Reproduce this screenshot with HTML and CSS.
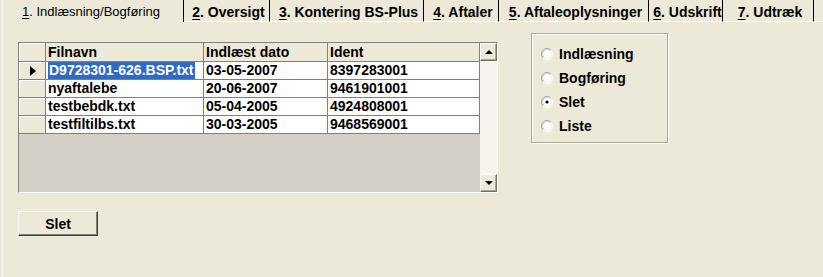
FILE: index.html
```html
<!DOCTYPE html>
<html>

<head>
    <meta charset="UTF-8">
    <link rel="stylesheet" href="styles.css">
</head>

<body>
    <!-- faneblade -->
    <div class="tabs">
        <div class="tab active"><u>1</u>. Indlæsning/Bogføring</div>
        <div class="tab t2"><u>2</u>. Oversigt</div>
        <div class="tab t3"><u>3</u>. Kontering BS-Plus</div>
        <div class="tab t4"><u>4</u>. Aftaler</div>
        <div class="tab t5"><u>5</u>. Aftaleoplysninger</div>
        <div class="tab t6"><u>6</u>. Udskrift</div>
        <div class="tab t7"><u>7</u>. Udtræk</div>
        <div class="tab-rest"></div>
    </div>

    <div class="panel">
        <div class="left">
            <!-- filoversigt -->
            <div class="grid">
                <div class="rows">
                    <div class="row head">
                        <div class="ind"></div>
                        <div class="cell">Filnavn</div>
                        <div class="cell">Indlæst dato</div>
                        <div class="cell">Ident</div>
                    </div>
                    <div class="row">
                        <div class="ind"><span class="pointer"></span></div>
                        <div class="cell"><span class="sel">D9728301-626.BSP.txt</span></div>
                        <div class="cell">03-05-2007</div>
                        <div class="cell">8397283001</div>
                    </div>
                    <div class="row">
                        <div class="ind"></div>
                        <div class="cell">nyaftalebe</div>
                        <div class="cell">20-06-2007</div>
                        <div class="cell">9461901001</div>
                    </div>
                    <div class="row">
                        <div class="ind"></div>
                        <div class="cell">testbebdk.txt</div>
                        <div class="cell">05-04-2005</div>
                        <div class="cell">4924808001</div>
                    </div>
                    <div class="row">
                        <div class="ind"></div>
                        <div class="cell">testfiltilbs.txt</div>
                        <div class="cell">30-03-2005</div>
                        <div class="cell">9468569001</div>
                    </div>
                </div>
                <div class="vscroll">
                    <div class="sbtn"><span class="arrow-up"></span></div>
                    <div class="track"></div>
                    <div class="sbtn"><span class="arrow-down"></span></div>
                </div>
            </div>

            <button class="btn">Slet</button>
        </div>

        <!-- valg -->
        <div class="group">
            <div class="radio">
                <svg viewBox="0 0 12 12" width="12" height="12">
                    <circle cx="6" cy="6" r="4" fill="#fff" />
                    <path d="M2.11 9.89 A5.5 5.5 0 0 1 9.89 2.11" stroke="#a7a6a0" fill="none" />
                    <path d="M9.89 2.11 A5.5 5.5 0 0 1 2.11 9.89" stroke="#fff" fill="none" />
                    <path d="M2.82 9.18 A4.5 4.5 0 0 1 9.18 2.82" stroke="#d6d4cc" fill="none" />
                    <path d="M9.18 2.82 A4.5 4.5 0 0 1 2.82 9.18" stroke="#f4f3ee" fill="none" />
                </svg>
                <span>Indlæsning</span>
            </div>
            <div class="radio">
                <svg viewBox="0 0 12 12" width="12" height="12">
                    <circle cx="6" cy="6" r="4" fill="#fff" />
                    <path d="M2.11 9.89 A5.5 5.5 0 0 1 9.89 2.11" stroke="#a7a6a0" fill="none" />
                    <path d="M9.89 2.11 A5.5 5.5 0 0 1 2.11 9.89" stroke="#fff" fill="none" />
                    <path d="M2.82 9.18 A4.5 4.5 0 0 1 9.18 2.82" stroke="#d6d4cc" fill="none" />
                    <path d="M9.18 2.82 A4.5 4.5 0 0 1 2.82 9.18" stroke="#f4f3ee" fill="none" />
                </svg>
                <span>Bogføring</span>
            </div>
            <div class="radio">
                <svg viewBox="0 0 12 12" width="12" height="12">
                    <circle cx="6" cy="6" r="4" fill="#fff" />
                    <path d="M2.11 9.89 A5.5 5.5 0 0 1 9.89 2.11" stroke="#a7a6a0" fill="none" />
                    <path d="M9.89 2.11 A5.5 5.5 0 0 1 2.11 9.89" stroke="#fff" fill="none" />
                    <path d="M2.82 9.18 A4.5 4.5 0 0 1 9.18 2.82" stroke="#d6d4cc" fill="none" />
                    <path d="M9.18 2.82 A4.5 4.5 0 0 1 2.82 9.18" stroke="#f4f3ee" fill="none" />
                    <circle cx="6" cy="6" r="1.6" fill="#000" />
                </svg>
                <span>Slet</span>
            </div>
            <div class="radio">
                <svg viewBox="0 0 12 12" width="12" height="12">
                    <circle cx="6" cy="6" r="4" fill="#fff" />
                    <path d="M2.11 9.89 A5.5 5.5 0 0 1 9.89 2.11" stroke="#a7a6a0" fill="none" />
                    <path d="M9.89 2.11 A5.5 5.5 0 0 1 2.11 9.89" stroke="#fff" fill="none" />
                    <path d="M2.82 9.18 A4.5 4.5 0 0 1 9.18 2.82" stroke="#d6d4cc" fill="none" />
                    <path d="M9.18 2.82 A4.5 4.5 0 0 1 2.82 9.18" stroke="#f4f3ee" fill="none" />
                </svg>
                <span>Liste</span>
            </div>
        </div>
    </div>
</body>

</html>
```

FILE: styles.css
```css
/* grundlag */
body {
    margin: 0;
    background-color: #ece9d8;
    font-family: "Liberation Sans", Arial, sans-serif;
    font-size: 14px;
    font-weight: bold;
    color: #000;
}

/* faneblade */
.tabs {
    display: flex;
    height: 22px;
}

.tab {
    box-sizing: border-box;
    height: 22px;
    padding-top: 3px;
    padding-left: 4px;
    line-height: 18px;
    text-align: center;
    white-space: nowrap;
    border-right: 1px solid #000;
    border-bottom: 1px solid #fff;
}

.tab u {
    text-decoration-thickness: 1px;
    text-underline-offset: 2px;
}

.tab.active {
    width: 182px;
    margin-left: 2px;
    padding-left: 19px;
    border-left: 1px solid #fff;
    border-bottom: none;
    text-align: left;
    font-size: 13px;
    font-weight: normal;
}

.t2 { width: 86px; }
.t3 { width: 154px; }
.t4 { width: 75px; }
.t5 { width: 150px; }
.t6 { width: 74px; }
.t7 { width: 91px; }

.tab-rest {
    flex: 1;
    border-bottom: 1px solid #fff;
}

/* indhold */
.panel {
    display: flex;
    align-items: flex-start;
    gap: 33px;
    height: 255px;
    margin-left: 2px;
    padding: 11px 0 0 15px;
    border-left: 1px solid #fff;
    box-sizing: border-box;
}

.left {
    margin-top: 9px;
}

/* gitter */
.grid {
    box-sizing: border-box;
    display: flex;
    width: 480px;
    height: 151px;
    border-top: 1px solid #808080;
    border-left: 1px solid #808080;
    border-right: 1px solid #fff;
    border-bottom: 1px solid #fff;
}

.rows {
    width: 461px;
    background-color: #d4d0c8;
}

.row {
    display: grid;
    grid-template-columns: 27px 158px 124px 152px;
    height: 18px;
}

.row.head {
    height: 19px;
}

.row > div {
    box-sizing: border-box;
    border-right: 1px solid #808080;
    border-bottom: 1px solid #808080;
    line-height: 17px;
    white-space: nowrap;
    overflow: hidden;
}

.cell {
    padding-left: 2px;
    background-color: #fff;
}

.head .cell,
.ind {
    background-color: #ece9d8;
}

.ind {
    position: relative;
    box-shadow: inset 1px 1px 0 #fff;
}

.head .cell {
    padding-top: 1px;
}

.sel {
    display: inline-block;
    padding: 0 1px;
    background-color: #316ac5;
    color: #fff;
}

.pointer {
    position: absolute;
    left: 11px;
    top: 4px;
    border-left: 6px solid #000;
    border-top: 5px solid transparent;
    border-bottom: 5px solid transparent;
}

/* rullebjælke */
.vscroll {
    display: flex;
    flex-direction: column;
    width: 17px;
    background-color: #f4f3ec;
}

.sbtn {
    box-sizing: border-box;
    height: 18px;
    display: flex;
    align-items: center;
    justify-content: center;
    background-color: #ece9d8;
    border: 1px solid;
    border-color: #fff #716f64 #716f64 #fff;
    box-shadow: inset -1px -1px 0 #aca899;
}

.track {
    flex: 1;
}

.arrow-up {
    border-bottom: 4px solid #000;
    border-left: 4px solid transparent;
    border-right: 4px solid transparent;
}

.arrow-down {
    border-top: 4px solid #000;
    border-left: 4px solid transparent;
    border-right: 4px solid transparent;
}

/* knap */
.btn {
    display: block;
    margin-top: 18px;
    width: 80px;
    height: 25px;
    box-sizing: border-box;
    padding: 0;
    font: inherit;
    background-color: #ece9d8;
    border: 1px solid;
    border-color: #fff #404040 #404040 #fff;
    box-shadow: inset -1px -1px 0 #808080;
}

/* valggruppe */
.group {
    box-sizing: border-box;
    width: 137px;
    height: 110px;
    padding: 8px 0 0 9px;
    border: 1px solid #aca899;
    box-shadow: inset 1px 1px 0 #fff, 1px 1px 0 #fff;
}

.radio {
    display: flex;
    align-items: center;
    gap: 6px;
    height: 24px;
}

.radio svg {
    display: block;
}
```
